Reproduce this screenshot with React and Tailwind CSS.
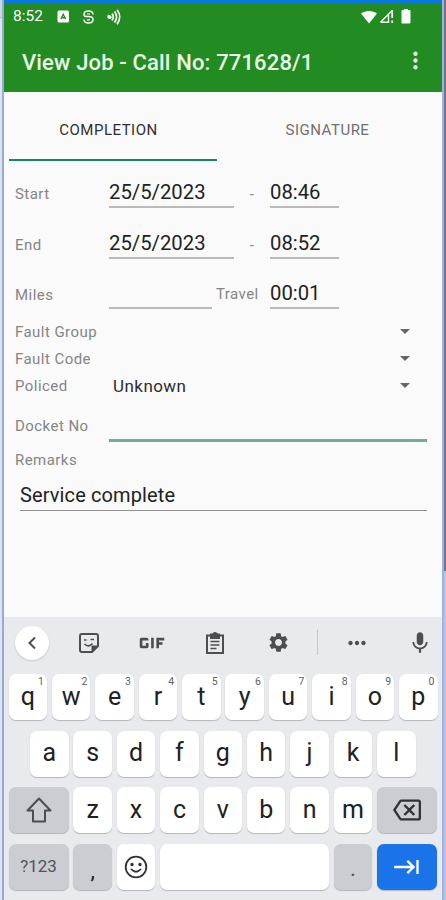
import {
  MdArrowDropDown,
  MdGif,
  MdKeyboardTab,
  MdMic,
  MdMoreHoriz,
  MdMoreVert,
  MdOutlineBackspace,
  MdSettings,
} from "react-icons/md";

const topRow = ["q", "w", "e", "r", "t", "y", "u", "i", "o", "p"];
const middleRow = ["a", "s", "d", "f", "g", "h", "j", "k", "l"];
const bottomRow = ["z", "x", "c", "v", "b", "n", "m"];

function StatusBar() {
  return (
    <div className="flex h-[27px] items-center pl-[9px] pr-[31px] text-white">
      <span className="w-[31px] text-[15.5px] leading-none whitespace-nowrap">8:52</span>
      <svg className="ml-[13px]" width="13" height="13" viewBox="0 0 13 13">
        <rect x="0.5" y="0.5" width="11.5" height="12" rx="1.5" fill="white" />
        <path d="M4 9 6.2 4.3 8.600 9M5 7.800h2.500" fill="none" stroke="#228b22" strokeWidth="1.4" />
      </svg>
      <svg className="ml-3" width="13" height="14" viewBox="0 0 13 14" fill="none" stroke="white" strokeWidth="1.5">
        <path d="M11 4.500C11 2 9 1 6.500 1S2 2 2 4.300 3.500 6.500 6.500 6.500 11 7.200 11 9.500 9 13 6.500 13 2 12 2 9.500" />
        <path d="M5 4h3M5 9.800h3" strokeWidth="1.2" />
      </svg>
      <svg className="ml-3" width="14" height="16" viewBox="0 0 14 16" fill="none" stroke="white" strokeWidth="1.8">
        <path d="M1 6.200l3.200 3.200M5 4.500c1.500 2 1.500 5 0 7M7.500 2.500c2.700 3.300 2.700 7.700 0 11M10 .8c3.500 4.400 3.500 10 0 14.400" />
        <circle cx="2.400" cy="8" r="1.200" fill="white" />
      </svg>

      <div className="ml-auto flex items-center">
        <svg width="18" height="14" viewBox="0 0 18 14" fill="white">
          <path d="M1 3.500C5 0 13 0 17 3.500L9 13.500z" />
        </svg>
        <svg className="ml-px" width="16" height="15" viewBox="0 0 16 15">
          <path d="M1.500 13.300 13 1.800M1.500 13.300h8V5.500" fill="none" stroke="white" strokeWidth="1.400" />
          <path d="M13.200 1v8M13.200 11.500v2.500" stroke="white" strokeWidth="1.700" />
        </svg>
        <svg className="ml-[6px]" width="10" height="15" viewBox="0 0 10 15" fill="white">
          <path d="M3 0h4v1h1.500q1 0 1 1v11.500q0 1-1 1h-7q-1 0-1-1V2q0-1 1-1H3z" />
        </svg>
      </div>
    </div>
  );
}

function Label({ children, className = "" }) {
  return <span className={`text-[15px] tracking-[0.45px] text-[#858585] ${className}`}>{children}</span>;
}

function Field({ children, className = "" }) {
  return (
    <div className={`h-[32px] border-b-2 border-[#b9b9b9] text-[20.3px] leading-[33px] text-[#222] ${className}`}>
      {children}
    </div>
  );
}

function TimeRow({ label, date, time }) {
  return (
    <div className="flex h-[50.5px] items-start">
      <Label className="w-[94px] pt-[7px]">{label}</Label>
      <Field className="w-[125px]">{date}</Field>
      <Label className="w-[36px] pt-[7px] text-center">-</Label>
      <Field className="w-[69px]">{time}</Field>
    </div>
  );
}

function SelectRow({ label, value }) {
  return (
    <div className="flex h-[27px] items-center pr-[10px]">
      <Label className="w-[98px]">{label}</Label>
      <span className="flex-1 text-[17px] tracking-[0.45px] text-[#2c2c2c]">{value}</span>
      <MdArrowDropDown className="mb-[4px]" size={24} color="#666" />
    </div>
  );
}

function Key({ children, hint, className = "w-[38.5px] bg-white" }) {
  return (
    <div
      className={`relative flex h-[46px] shrink-0 items-center justify-center rounded-[7px] text-[25px] leading-none text-[#202124] shadow-[0_1px_1px_#b4b6ba] ${className}`}
    >
      {children}
      {hint && <span className="absolute right-[3px] top-[3px] text-[10.5px] text-[#606368]">{hint}</span>}
    </div>
  );
}

function Letter({ children }) {
  return <span className="-translate-y-[1.5px]">{children}</span>;
}

function Toolbar() {
  return (
    <div className="flex h-[57px] items-center pb-[6px] text-[#4b4e52]">
      <div className="ml-[11px] flex size-[34px] items-center justify-center rounded-full bg-white shadow-[0_1px_2px_#c4c6ca]">
        <svg width="10" height="14" viewBox="0 0 10 14" fill="none" stroke="currentColor" strokeWidth="2">
          <path d="M8 1.500 2.500 7 8 12.500" />
        </svg>
      </div>
      <svg className="ml-[30px]" width="20" height="20" viewBox="0 0 20 20" fill="none" stroke="currentColor" strokeWidth="2">
        <path d="M3 1h14q2 0 2 2v10l-6 6H3q-2 0-2-2V3q0-2 2-2z" />
        <path d="M13 19v-6h6z" fill="currentColor" strokeWidth="1" />
        <path d="M5 7h2.500M11.500 6.500H15M5.500 11q4 4 8-.5" strokeWidth="1.600" />
      </svg>
      <MdGif className="ml-[32px]" size={42} />
      <svg className="ml-[32px]" width="20" height="22" viewBox="0 0 20 22" fill="none" stroke="currentColor" strokeWidth="2">
        <path d="M2 3.500h16V21H2z" />
        <path d="M6 2.500h8V6H6z" fill="currentColor" />
        <circle cx="10" cy="2.500" r="1.500" fill="currentColor" />
        <path d="M5.500 9.500h9M5.500 13h9M5.500 16.500h6" strokeWidth="1.700" />
      </svg>
      <MdSettings className="ml-[42px]" size={23} />
      <div className="ml-[27px] h-[25px] w-px bg-[#c4c6ca]" />
      <MdMoreHoriz className="ml-[26px]" size={26} />
      <MdMic className="ml-[37px]" size={26} />
    </div>
  );
}

function Keyboard() {
  return (
    <div className="h-[283px] bg-[#e8eaed]">
      <Toolbar />
      <div className="flex flex-col gap-[10.5px]">
        <div className="flex gap-[4.9px] pl-[4.5px]">
          {topRow.map((k, i) => (
            <Key key={k} hint={String((i + 1) % 10)}>
              <Letter>{k}</Letter>
            </Key>
          ))}
        </div>
        <div className="flex gap-[4.9px] pl-[26px]">
          {middleRow.map((k) => (
            <Key key={k}>
              <Letter>{k}</Letter>
            </Key>
          ))}
        </div>
        <div className="flex gap-[4.9px] pl-[4.5px]">
          <Key className="w-[60px] bg-[#cbcdd2]">
            <svg width="26" height="26" viewBox="0 0 26 26" fill="none" stroke="#4b4e52" strokeWidth="2" strokeLinejoin="round">
              <path d="M13 1.500 1.500 13.500H7V24.500h12v-11h5.500z" />
            </svg>
          </Key>
          {bottomRow.map((k) => (
            <Key key={k}>
              <Letter>{k}</Letter>
            </Key>
          ))}
          <Key className="w-[60px] bg-[#cbcdd2]">
            <MdOutlineBackspace size={28} color="#303236" />
          </Key>
        </div>
        <div className="flex gap-[4.9px] pl-[4.5px]">
          <Key className="w-[60px] bg-[#cbcdd2]">
            <span className="text-[17px] text-[#505358]">?123</span>
          </Key>
          <Key className="w-[38.5px] bg-[#cbcdd2]">
            <span className="translate-y-[4px] text-[22px]">,</span>
          </Key>
          <Key>
            <svg width="24" height="24" viewBox="0 0 24 24" fill="none" stroke="#303236" strokeWidth="1.800">
              <circle cx="12" cy="12" r="10.300" />
              <path d="M7 14q5 5.500 10 0" />
              <circle cx="8" cy="9.500" r=".8" fill="#303236" />
              <circle cx="16" cy="9.500" r=".8" fill="#303236" />
            </svg>
          </Key>
          <Key className="w-[168.700px] bg-white" />
          <Key className="w-[38.5px] bg-[#cbcdd2]">
            <span className="translate-y-[2px] text-[22px] text-[#505358]">.</span>
          </Key>
          <Key className="w-[60px] bg-[#1a73e8]">
            <MdKeyboardTab size={28} color="white" />
          </Key>
        </div>
      </div>
    </div>
  );
}

export default function App() {
  return (
    <div className="flex h-[900px] w-[446px] overflow-hidden bg-[#dfe1e5] font-['Roboto',sans-serif]">
      {/* window edge */}
      <div className="flex w-[2px] shrink-0 flex-col bg-[#e0e4ea]">
        <div className="h-[18px] border-b border-[#b5bac2] bg-[#d3d5dc]" />
      </div>
      <div className="w-[2px] shrink-0 bg-[#91abdd]" />

      <main className="flex w-[438px] shrink-0 flex-col bg-[#fafafa]">
        <div className="h-[3px] bg-[#0878df]" />
        <header className="h-[89px] bg-[#228b22]">
          <StatusBar />
          <div className="flex h-[62px] items-center justify-between pl-[18px] pr-[13px] text-[#e9f8e9]">
            <h1 className="pt-[2px] text-[22px] font-medium tracking-[0.15px] whitespace-nowrap">
              View Job - Call No: 771628/1
            </h1>
            <MdMoreVert className="mb-px" size={27} />
          </div>
        </header>

        <nav className="flex h-[69px] px-[5px] text-[15px] tracking-[0.5px]">
          <div className="flex w-[208px] items-center justify-center border-b-2 border-[#168366] pt-[9px] pr-[9px] text-[#303030]">
            COMPLETION
          </div>
          <div className="flex flex-1 items-center justify-center pt-[7px] pl-[1px] text-[#707070]">SIGNATURE</div>
        </nav>

        <section className="flex flex-1 flex-col pt-[15px] pl-[11px] pr-[15px]">
          <TimeRow label="Start" date="25/5/2023" time="08:46" />
          <TimeRow label="End" date="25/5/2023" time="08:52" />
          <div className="flex h-[42px] items-start">
            <Label className="w-[94px] pt-[7px]">Miles</Label>
            <Field className="w-[103px]" />
            <Label className="w-[58px] pt-[6px] pl-[4px]">Travel</Label>
            <Field className="w-[69px]">00:01</Field>
          </div>
          <SelectRow label="Fault Group" />
          <SelectRow label="Fault Code" />
          <SelectRow label="Policed" value="Unknown" />
          <div className="flex h-[42px] items-start">
            <Label className="w-[94px] pt-[15px]">Docket No</Label>
            <div className="h-[42px] flex-1 border-b-[3px] border-[#72ab98]" />
          </div>
          <Label className="pt-[7px]">Remarks</Label>
          <div className="ml-[5px] h-[39px] border-b border-[#929292] pt-[7px] text-[20px] leading-[32px] tracking-[0.12px] text-[#222]">
            Service complete
          </div>
        </section>

        <Keyboard />
      </main>

      <div className="w-[2px] shrink-0 bg-[#9fb2e2]" />
      <div className="flex w-[2px] shrink-0 flex-col">
        <div className="h-[571px] bg-[#70738c]" />
        <div className="flex-1 bg-[#b5c6e3]" />
      </div>
    </div>
  );
}
